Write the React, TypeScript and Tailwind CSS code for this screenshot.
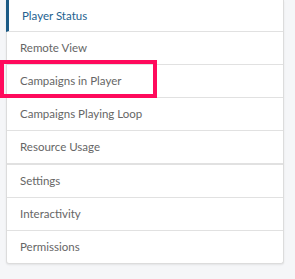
import React from "react";

const items = [
  "Remote View",
  "Campaigns in Player",
  "Campaigns Playing Loop",
  "Resource Usage",
];
const items2 = ["Settings", "Interactivity", "Permissions"];

export default function App() {
  return (
    <div
      className="relative w-[295px] h-[279px] bg-[#f5f6f8] overflow-hidden"
      style={{ fontFamily: 'Lato, "Open Sans", "Liberation Sans", sans-serif' }}
    >
      <div className="ml-[6px] w-[278px] bg-white border-x border-b border-[#dcdcdc] rounded-b-[3px] shadow-[0_1px_2px_rgba(0,0,0,0.08)]">
        <div className="h-[32px] -ml-px border-l-[3px] border-l-[#1b5a85] border-b border-b-[#e1e1e1] flex items-center pl-[13px] text-[11.5px] text-[#25628f]">
          Player Status
        </div>
        {items.map((t, i) => (
          <div
            key={t}
            className={
              i === items.length - 1
                ? "h-[34px] border-b-2 border-[#e1e1e1] flex items-center pl-[13px] text-[11.5px] text-[#666666]"
                : "h-[33px] border-b border-[#e1e1e1] flex items-center pl-[13px] text-[11.5px] text-[#666666]"
            }
          >
            {t}
          </div>
        ))}
        {items2.map((t, i) => (
          <div
            key={t}
            className={
              i === items2.length - 1
                ? "h-[32px] flex items-center pl-[13px] text-[11.5px] text-[#666666]"
                : "h-[33px] border-b border-[#e1e1e1] flex items-center pl-[13px] text-[11.5px] text-[#666666]"
            }
          >
            {t}
          </div>
        ))}
      </div>
      <div className="absolute left-0 top-[60px] w-[157px] h-[38px] border-4 border-[#ff0a5c]" />
    </div>
  );
}
